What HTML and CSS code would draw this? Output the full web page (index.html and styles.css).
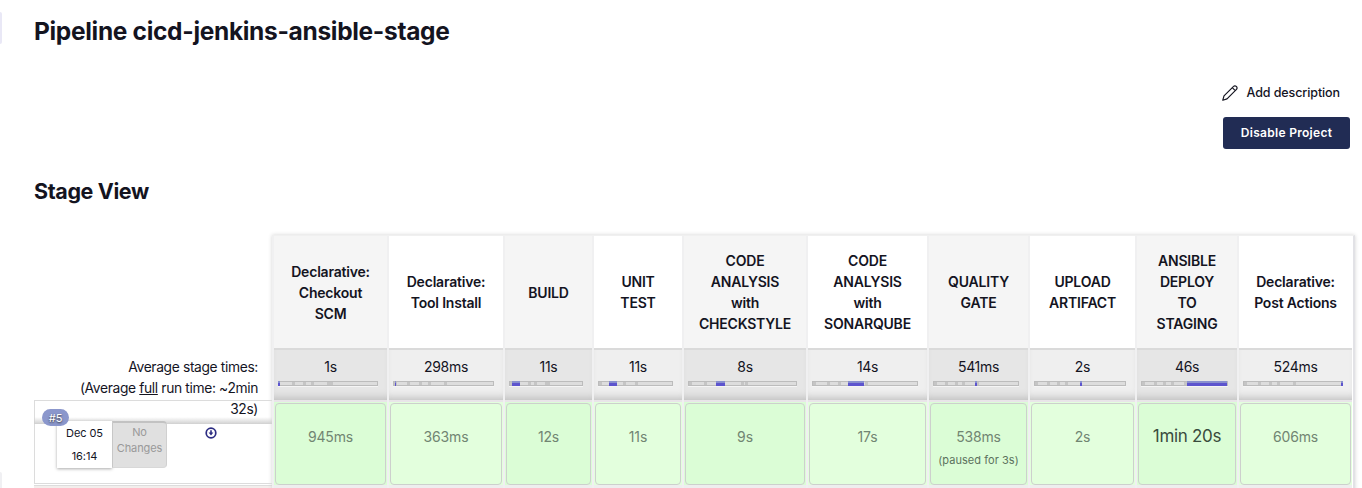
FILE: index.html
```html
<!DOCTYPE html>
<html lang="en">
<head>
<meta charset="utf-8">
<title>cicd-jenkins-ansible-stage</title>
<link rel="stylesheet" href="styles.css">
</head>
<body>
<aside class="side-edge"><span class="side-item"></span><span class="side-item side-item-low"></span></aside>
<main class="main">
  <h1 class="title">Pipeline cicd-jenkins-ansible-stage</h1>
  <div class="actions">
    <a class="add-description">
      <svg class="pencil" viewBox="0 0 16 16"><path d="M.8 15.2 2 10.9 11.6 1.4a1.8 1.8 0 0 1 2.6 0l.3.3a1.8 1.8 0 0 1 0 2.6L5 13.9ZM10.3 2.7l2.9 2.9"/></svg>
      <span>Add description</span>
    </a>
    <button class="disable">Disable Project</button>
  </div>
  <h2 class="subtitle">Stage View</h2>
  <section class="stage-view">
    <div class="side">
      <div class="averages">Average stage times:<br>(Average <u>full</u> run time: ~2min<br>32s)</div>
      <div class="run">
        <span class="badge">#5</span>
        <div class="run-info">
          <div class="run-date"><span>Dec 05</span><span>16:14</span></div>
          <div class="changes">No<br>Changes</div>
        </div>
        <svg class="download" viewBox="0 0 12 12"><circle cx="6" cy="6" r="4.8"/><path class="arrow" d="M5.2 3.2h1.6v2.4h1.6L6 8.6 3.6 5.6h1.6z"/></svg>
      </div>
      <div class="next-run"></div>
    </div>
    <div class="stages" id="stages"></div>
  </section>
</main>
<script src="stages.js"></script>
</body>
</html>
```

FILE: styles.css
```css
* { box-sizing: border-box; }
body { margin: 0; height: 488px; overflow: hidden; background: #fff; color: #14141f; font-family: Inter, sans-serif; font-size: 14px; display: flex; }
.side-edge { width: 34px; flex: none; padding-top: 12px; }
.side-item { display: block; width: 2px; height: 32px; background: #e9e8f6; border-radius: 0 4px 4px 0; }
.side-item-low { margin-top: 428px; background: #f0f0f3; }
.main { width: 1328px; flex: none; }
.title { margin: 0; padding-top: 15px; height: 77px; font-size: 24.5px; line-height: 32px; font-weight: 700; letter-spacing: -0.32px; white-space: nowrap; }
.actions { display: flex; flex-direction: column; align-items: flex-end; padding-right: 12px; }
.add-description { display: flex; align-items: center; gap: 9px; height: 31px; margin-right: 10px; font-size: 12.5px; font-weight: 500; letter-spacing: -0.1px; }
.pencil { width: 16px; height: 16px; fill: none; stroke: #14141f; stroke-width: 1.2; stroke-linejoin: round; }
.disable { width: 127px; height: 32px; margin-top: 9px; padding: 0 0 1px; border: 0; border-radius: 3px; background: #212c54; color: #fff; font: 600 12px Inter, sans-serif; letter-spacing: .3px; }
.subtitle { margin: 0; height: 86px; padding-top: 28px; font-size: 21.5px; line-height: 28px; letter-spacing: -0.38px; }
.stage-view { display: flex; }
.side { width: 238px; padding-top: 115px; }
.averages { position: relative; z-index: 1; height: 74px; margin-bottom: -24px; padding: 7px 14px 0 0; text-align: right; font-size: 13.8px; line-height: 21px; letter-spacing: -0.35px; white-space: nowrap; }
.averages::after { content: ""; position: absolute; inset: auto 0 0 0; height: 7px; background: linear-gradient(transparent, #d0d0d0); }
.run { position: relative; height: 84px; border: 1px solid #dcdcdc; border-right: 0; display: flex; padding: 20px 0 0 22px; gap: 37px; }
.badge { position: absolute; z-index: 3; left: 7px; top: 8px; width: 27px; height: 17px; border-radius: 9px; background: #8b97cc; color: #fff; text-shadow: 0 1px 2px #333; font-size: 11px; line-height: 18px; text-align: center; }
.run-info { position: relative; z-index: 2; display: flex; width: 111px; height: 47px; font-size: 11px; letter-spacing: -0.1px; }
.run-date { width: 55px; background: #fff; box-shadow: 0 1px 3px #aaa; display: flex; flex-direction: column; align-items: center; padding-top: 1px; line-height: 23px; }
.changes { width: 55px; background: #e0e0e0; border: 1px solid #c7c7c7; border-top: 2px solid #c2c2c2; border-right-color: #d0d0d0; border-bottom-color: #d8d8d8; border-radius: 0 4px 4px 0; color: #999; line-height: 16px; text-align: center; padding-top: 1px; }
.download { width: 12px; height: 12px; margin-top: 6px; fill: none; stroke: #2c2c82; stroke-width: 1.7; }
.arrow { fill: #2c2c82; stroke: none; }
.next-run { height: 5px; margin-top: 1px; background: #f3eeec; border-top: 1px solid #ddd; }
.stages { display: grid; grid-template-columns: 115px 116px 89px 90px 124px 121px 101px 107px 102px 115px; flex: none; width: 1083px; border-top: 1px solid #f0f0f0; border-right: 2px solid #e2e2e6; box-shadow: 0 0 4px #d4d4d4; background: #fff; height: 260px; }
.stage { border-left: 2px solid #f0f0f1; display: grid; grid-template-rows: 112px 52px 88px; }
.stage-name { display: flex; align-items: center; justify-content: center; text-align: center; white-space: pre-line; font-weight: 600; font-size: 14px; line-height: 21px; letter-spacing: -0.2px; }
.stage-total { background: #efefef; border-top: 2px solid #dadada; padding: 7px 9px 0 4px; box-shadow: inset 0 -8px 8px -6px #bbb; text-align: center; line-height: 20px; letter-spacing: -0.3px; }
.stage-total span { display: block; padding-left: 5px; }
.bar { position: relative; height: 5px; margin-top: 4px; border: 1px solid #bcbcbc; background: #ddd; box-shadow: 0 1px 0 #f5f5f5; }
.tick { position: absolute; top: 0; width: 3px; height: 3px; background: #c5c5c5; }
.fill { position: absolute; top: -1px; height: 5px; min-width: 1.5px; background: linear-gradient(#8990cf 50%, #5d54ce 50%); }
.stage-run { background: #e3ffdd; border-top: 2px solid #e9e5e9; border-bottom: 3px solid #eee; padding: 1px 1px 0; }
.stage-box { height: 82px; border: 1px solid #cdd0cd; border-radius: 4px; padding-top: 22px; text-align: center; line-height: 21px; color: #718572; letter-spacing: -0.15px; }
.note { font-size: 11px; line-height: 27px; color: #5b725e; letter-spacing: .05px; margin: 0 -2px; white-space: nowrap; }
.slow { font-size: 17px; color: #394b3d; letter-spacing: -0.3px; }
.stage:nth-child(odd) .stage-name { background: #f5f5f5; }
.stage:nth-child(odd) .stage-total { background: #e6e6e6; }
.stage:nth-child(odd) .stage-run { background: #dbfdd6; }
```

FILE: stages.js
```js
// name, average, bar start %, bar width %, run time, note, tick positions %
const stages = [
  ['Declarative:\nCheckout\nSCM', '1s', -1, 1, '945ms', '', [13, 24, 33, 49, 52]],
  ['Declarative:\nTool Install', '298ms', 1, 1, '363ms', '', [0, 13, 25, 34, 50]],
  ['BUILD', '11s', 3, 11, '12s', '', [0, 25, 33, 49, 52]],
  ['UNIT\nTEST', '11s', 14, 11, '11s', '', [0, 33, 49]],
  ['CODE\nANALYSIS\nwith\nCHECKSTYLE', '8s', 25, 9, '9s', '', [0, 14, 49, 52]],
  ['CODE\nANALYSIS\nwith\nSONARQUBE', '14s', 34, 15, '17s', '', [0, 13, 24, 50]],
  ['QUALITY\nGATE', '541ms', 49, 1, '538ms', '(paused for 3s)', [0, 13, 25, 33, 50]],
  ['UPLOAD\nARTIFACT', '2s', 50, 2, '2s', '', [0, 13, 24, 33]],
  ['ANSIBLE\nDEPLOY\nTO\nSTAGING', '46s', 52.5, 47, '1min 20s', '', [0, 14, 25, 34, 49]],
  ['Declarative:\nPost Actions', '524ms', 99, 1, '606ms', '', [0, 14, 25, 34, 50]]
];
document.getElementById('stages').innerHTML = stages.map(s => `
  <div class="stage">
    <div class="stage-name">${s[0]}</div>
    <div class="stage-total"><span>${s[1]}</span><div class="bar">${s[6].map(t => `<i class="tick" style="left:${t}%"></i>`).join('')}<i class="fill" style="left:${s[2]}%;width:${s[3]}%"></i></div></div>
    <div class="stage-run"><div class="stage-box${s[4].includes('min') ? ' slow' : ''}">${s[4]}${s[5] ? `<div class="note">${s[5]}</div>` : ''}</div></div>
  </div>`).join('');
```
